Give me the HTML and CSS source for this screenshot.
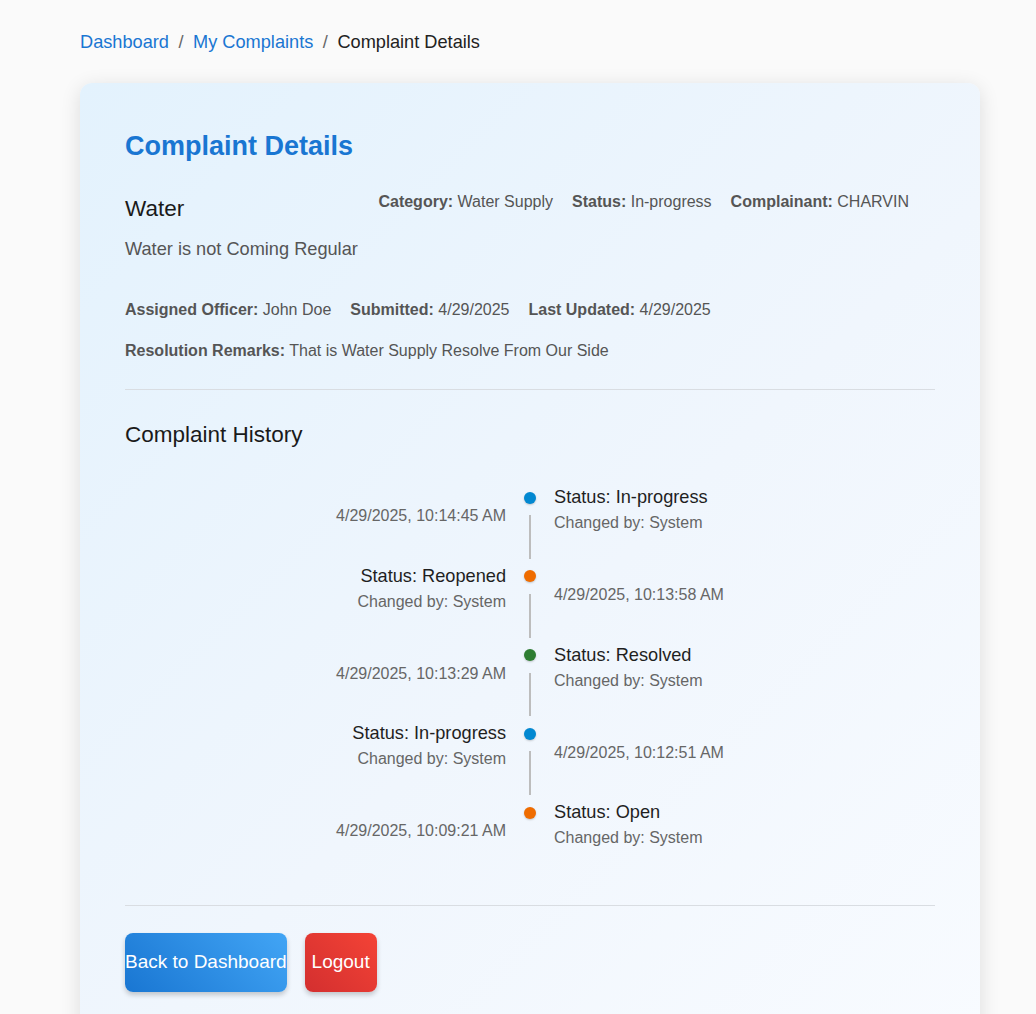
FILE: index.html
```html
<!DOCTYPE html>
<html lang="en">
<head>
<meta charset="utf-8">
<title>Complaint Details</title>
<link rel="stylesheet" href="styles.css">
</head>
<body>
<div class="page">
  <nav class="crumbs">
    <a class="crumb-link" href="#">Dashboard</a>
    <span class="crumb-sep">/</span>
    <a class="crumb-link" href="#">My Complaints</a>
    <span class="crumb-sep">/</span>
    <span class="crumb-current">Complaint Details</span>
  </nav>

  <section class="card">
    <h1 class="card-title">Complaint Details</h1>

    <div class="head-row">
      <h2 class="subject">Water</h2>
      <div class="meta">
        <span><b>Category:</b> Water Supply</span>
        <span><b>Status:</b> In-progress</span>
        <span><b>Complainant:</b> CHARVIN</span>
      </div>
    </div>

    <p class="desc">Water is not Coming Regular</p>

    <div class="meta meta-row">
      <span><b>Assigned Officer:</b> John Doe</span>
      <span><b>Submitted:</b> 4/29/2025</span>
      <span><b>Last Updated:</b> 4/29/2025</span>
    </div>
    <div class="meta remarks">
      <span><b>Resolution Remarks:</b> That is Water Supply Resolve From Our Side</span>
    </div>

    <hr class="divider divider-top">

    <h2 class="history-title">Complaint History</h2>

    <ul class="timeline">
      <li class="tl-item">
        <div class="tl-opposite">4/29/2025, 10:14:45 AM</div>
        <div class="tl-sep"><span class="tl-dot dot-blue"></span><span class="tl-line"></span></div>
        <div class="tl-content">
          <div class="tl-status">Status: In-progress</div>
          <div class="tl-by">Changed by: System</div>
        </div>
      </li>
      <li class="tl-item tl-flip">
        <div class="tl-opposite">4/29/2025, 10:13:58 AM</div>
        <div class="tl-sep"><span class="tl-dot dot-orange"></span><span class="tl-line"></span></div>
        <div class="tl-content">
          <div class="tl-status">Status: Reopened</div>
          <div class="tl-by">Changed by: System</div>
        </div>
      </li>
      <li class="tl-item">
        <div class="tl-opposite">4/29/2025, 10:13:29 AM</div>
        <div class="tl-sep"><span class="tl-dot dot-green"></span><span class="tl-line"></span></div>
        <div class="tl-content">
          <div class="tl-status">Status: Resolved</div>
          <div class="tl-by">Changed by: System</div>
        </div>
      </li>
      <li class="tl-item tl-flip">
        <div class="tl-opposite">4/29/2025, 10:12:51 AM</div>
        <div class="tl-sep"><span class="tl-dot dot-blue"></span><span class="tl-line"></span></div>
        <div class="tl-content">
          <div class="tl-status">Status: In-progress</div>
          <div class="tl-by">Changed by: System</div>
        </div>
      </li>
      <li class="tl-item">
        <div class="tl-opposite">4/29/2025, 10:09:21 AM</div>
        <div class="tl-sep"><span class="tl-dot dot-orange"></span></div>
        <div class="tl-content">
          <div class="tl-status">Status: Open</div>
          <div class="tl-by">Changed by: System</div>
        </div>
      </li>
    </ul>

    <hr class="divider divider-bottom">

    <div class="actions">
      <button class="btn btn-back" type="button">Back to Dashboard</button>
      <button class="btn btn-logout" type="button">Logout</button>
    </div>
  </section>
</div>
</body>
</html>
```

FILE: styles.css
```css
* { box-sizing: border-box; }

html, body {
  margin: 0;
  padding: 0;
  background: #fafafa;
  font-family: "Liberation Sans", Arial, sans-serif;
  color: #222;
}

.page {
  padding: 30px 0 0 80px;
  width: 980px;
}

.crumbs {
  font-size: 18.2px;
  line-height: 24px;
  margin-bottom: 29px;
  display: flex;
  align-items: center;
}
.crumb-link { color: #1976d2; text-decoration: none; }
.crumb-sep { color: #666; margin: 0 9.5px; }
.crumb-current { color: #222; }

.card {
  width: 900px;
  border-radius: 12px;
  background: linear-gradient(135deg, #e3f2fd 0%, #f0f6fd 55%, #f8fbff 100%);
  box-shadow: 0 4px 20px rgba(0, 0, 0, 0.12);
  padding: 46px 45px 45px 45px;
}

.card-title {
  margin: 0 0 30px;
  font-size: 27px;
  line-height: 34px;
  font-weight: 700;
  color: #1976d2;
}

.head-row {
  display: flex;
  justify-content: space-between;
  align-items: flex-start;
}
.subject {
  margin: 0;
  font-size: 22.5px;
  line-height: 32px;
  font-weight: 400;
  color: #1a1a1a;
}
.meta {
  display: flex;
  gap: 19px;
  font-size: 16px;
  line-height: 18px;
  color: #555;
}
.head-row .meta { margin-right: 26px; }
.meta b { font-weight: 700; }

.desc {
  margin: 12px 0 0;
  font-size: 18.2px;
  line-height: 24px;
  color: #555;
}

.meta-row { margin-top: 39px; line-height: 20px; }
.remarks { margin-top: 21px; line-height: 20px; }

.divider {
  border: 0;
  height: 1px;
  background: #d9dde2;
  margin: 0;
}
.divider-top { margin-top: 28px; }

.history-title {
  margin: 31px 0 0;
  font-size: 22.5px;
  line-height: 28px;
  font-weight: 400;
  color: #1a1a1a;
}

.timeline {
  list-style: none;
  margin: 25px 0 0;
  padding: 6px 16px;
  display: flex;
  flex-direction: column;
}

.tl-item {
  display: flex;
  min-height: 78.75px;
}
.tl-flip { flex-direction: row-reverse; }

.tl-opposite {
  flex: 1;
  margin: auto 0;
  padding: 6px 18px 12px;
  text-align: right;
  font-size: 16px;
  line-height: 20px;
  color: #666;
}
.tl-flip .tl-opposite { text-align: left; }

.tl-content {
  flex: 1;
  padding: 6px 18px;
  text-align: left;
}
.tl-flip .tl-content { text-align: right; }

.tl-status {
  font-size: 18.2px;
  line-height: 23px;
  color: #1f1f1f;
}
.tl-by {
  margin-top: 2px;
  font-size: 16px;
  line-height: 24px;
  color: #666;
}

.tl-sep {
  flex: none;
  width: 12px;
  display: flex;
  flex-direction: column;
  align-items: center;
}
.tl-dot {
  width: 12px;
  height: 12px;
  border-radius: 50%;
  margin: 11.5px 0;
  box-shadow: 0 1px 2px rgba(0, 0, 0, 0.2);
}
.dot-blue { background: #0288d1; }
.dot-orange { background: #ef6c00; }
.dot-green { background: #2e7d32; }
.tl-line {
  flex: 1;
  width: 2px;
  background: #bdbdbd;
}

.divider-bottom { margin-top: 25px; }

.actions {
  display: flex;
  gap: 18px;
  margin-top: 27px;
}
.btn {
  height: 59px;
  border: 0;
  border-radius: 8px;
  color: #fff;
  font-family: "Liberation Sans", Arial, sans-serif;
  font-size: 19px;
  white-space: nowrap;
  display: inline-flex;
  align-items: center;
  justify-content: center;
  padding: 0 7px;
  box-shadow: 0 3px 5px rgba(0, 0, 0, 0.2);
  cursor: pointer;
}
.btn-back {
  padding: 0;
  background: linear-gradient(45deg, #1976d2 0%, #42a5f5 100%);
}
.btn-logout {
  background: linear-gradient(45deg, #d32f2f 0%, #f44336 100%);
}
```
